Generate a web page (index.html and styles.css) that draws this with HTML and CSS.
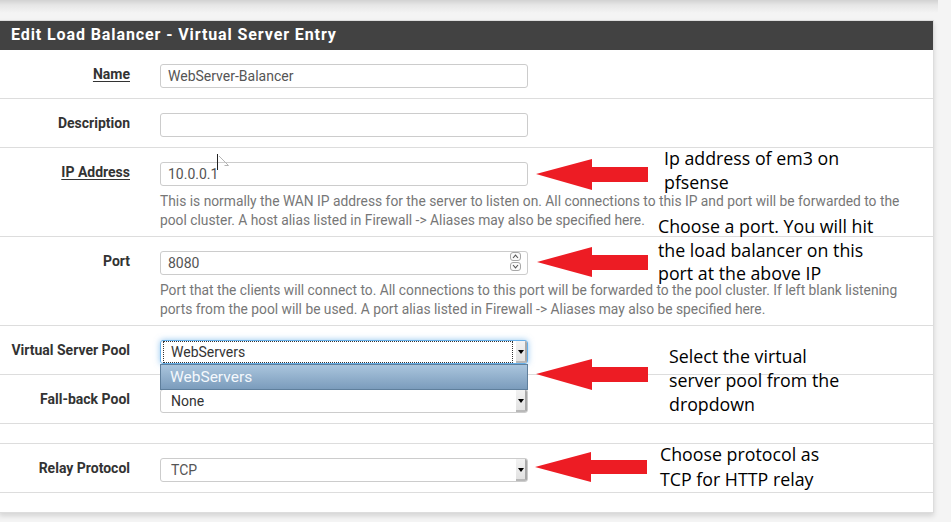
FILE: index.html
```html
<!DOCTYPE html>
<html>
<head>
<meta charset="utf-8">
<title>Edit Load Balancer - Virtual Server Entry</title>
<link rel="stylesheet" href="styles.css">
</head>
<body>
<div class="nav-shadow"></div>
<div class="panel">
  <div class="panel-heading">Edit Load Balancer - Virtual Server Entry</div>
  <div class="panel-body">
    <div class="row">
      <div class="lbl"><span class="u">Name</span></div>
      <div class="ctrl"><div class="input">WebServer-Balancer</div></div>
    </div>
    <div class="row">
      <div class="lbl">Description</div>
      <div class="ctrl"><div class="input"></div></div>
    </div>
    <div class="row has-help">
      <div class="lbl"><span class="u">IP Address</span></div>
      <div class="ctrl">
        <div class="input">10.0.0.1</div>
        <div class="help">This is normally the WAN IP address for the server to listen on. All connections to this IP and port will be forwarded to the<br>pool cluster. A host alias listed in Firewall -&gt; Aliases may also be specified here.</div>
      </div>
    </div>
    <div class="row has-help">
      <div class="lbl">Port</div>
      <div class="ctrl">
        <div class="input number">8080
          <span class="spin">
            <span class="spin-btn"><svg width="7" height="5" viewBox="0 0 7 5"><path d="M1 4 L3.5 1.2 L6 4" fill="none" stroke="#555" stroke-width="1.1"/></svg></span>
            <span class="spin-btn"><svg width="7" height="5" viewBox="0 0 7 5"><path d="M1 1 L3.5 3.8 L6 1" fill="none" stroke="#555" stroke-width="1.1"/></svg></span>
          </span>
        </div>
        <div class="help">Port that the clients will connect to. All connections to this port will be forwarded to the pool cluster. If left blank listening<br>ports from the pool will be used. A port alias listed in Firewall -&gt; Aliases may also be specified here.</div>
      </div>
    </div>
    <div class="row">
      <div class="lbl">Virtual Server Pool</div>
      <div class="ctrl">
        <div class="select focus">
          <span class="val">WebServers</span>
          <span class="dots"></span>
          <span class="sbtn"><span class="tri"></span></span>
          <div class="dropdown">WebServers</div>
        </div>
      </div>
    </div>
    <div class="row">
      <div class="lbl">Fall-back Pool</div>
      <div class="ctrl">
        <div class="select"><span class="val">None</span><span class="sbtn"><span class="tri"></span></span></div>
      </div>
    </div>
    <div class="row empty"></div>
    <div class="row">
      <div class="lbl">Relay Protocol</div>
      <div class="ctrl">
        <div class="select"><span class="val light">TCP</span><span class="sbtn"><span class="tri"></span></span></div>
      </div>
    </div>
  </div>
</div>

<svg class="overlay" width="951" height="522" viewBox="0 0 951 522">
  <g fill="#ed1c24">
    <polygon points="536,174 592,159 592,167 648,167 648,182 592,182 592,190"/>
    <polygon points="537,262 592,247 592,255 648,255 648,270 592,270 592,277"/>
    <polygon points="536,374 592,359 592,367 648,367 648,382 592,382 592,390"/>
    <polygon points="535,467 591,452 591,460 647,460 647,474 591,474 591,482"/>
  </g>
  <line x1="217.5" y1="154" x2="217.5" y2="170" stroke="#222" stroke-width="1"/>
  <polyline points="219,156 228.5,165.5 224.5,165.5" fill="none" stroke="#b5b5b5" stroke-width="1"/>
</svg>

<div class="note n1">Ip address of em3 on<br>pfsense</div>
<div class="note n2">Choose a port. You will hit<br>the load balancer on this<br>port at the above IP</div>
<div class="note n3">Select the virtual<br>server pool from the<br>dropdown</div>
<div class="note n4">Choose protocol as<br>TCP for HTTP relay</div>
</body>
</html>
```

FILE: styles.css
```css
* { box-sizing: border-box; }
html, body { margin: 0; padding: 0; }
body {
  background: #f4f4f4;
  font-family: Roboto, "Liberation Sans", Arial, sans-serif;
  width: 951px;
  height: 522px;
  overflow: hidden;
  position: relative;
}
.nav-shadow {
  height: 20px;
  width: 938px;
  background: linear-gradient(#d2d2d2, #e6e6e6 5px, #f4f4f4 13px);
}
.panel {
  margin-left: -1px;
  width: 935px;
  background: #fff;
  border: 1px solid #ddd;
  box-shadow: 0 3px 5px rgba(0,0,0,.13);
}
.panel-heading {
  height: 29px;
  background: #424242;
  color: #fff;
  font-weight: 700;
  font-size: 16px;
  line-height: 28px;
  padding-left: 11px;
  letter-spacing: .9px;
}
.panel-body { padding-bottom: 19px; }
.row {
  display: flex;
  border-bottom: 1px solid #ddd;
  padding: 14px 0 10px;
}
.row.has-help { padding-bottom: 6px; }
.row.empty { height: 20px; padding: 0; }
.lbl {
  width: 145px;
  flex: none;
  padding-right: 15px;
  text-align: right;
  font-weight: 700;
  font-size: 14px;
  line-height: 20px;
  color: #333;
}
.u { text-decoration: underline; text-underline-offset: 2px; text-decoration-thickness: 1px; }
.ctrl { flex: 1; padding-left: 15px; position: relative; }
.input {
  width: 368px;
  height: 24px;
  border: 1px solid #ccc;
  border-radius: 3px;
  padding: 0 7px;
  font-size: 14px;
  line-height: 22px;
  color: #555;
  position: relative;
}
.help {
  color: #777;
  font-size: 13.8px;
  line-height: 19px;
  margin-top: 6px;
  white-space: nowrap;
}
.spin {
  position: absolute;
  right: 6px;
  top: 0;
  display: flex;
  flex-direction: column;
  gap: 1px;
}
.spin-btn {
  width: 11px;
  height: 9px;
  border: 1px solid #a8a8a8;
  border-radius: 3px;
  background: #fafafa;
  display: flex;
  align-items: center;
  justify-content: center;
}
.spin-btn svg { display: block; }
.select {
  width: 368px;
  height: 24px;
  border: 1px solid #ccc;
  border-radius: 3px;
  font-size: 14px;
  line-height: 22px;
  color: #333;
  position: relative;
  padding-left: 10px;
}
.select .val.light { color: #555; }
.select.focus {
  border-color: #66afe9;
  box-shadow: 0 0 6px rgba(102,175,233,.7);
}
.dots {
  position: absolute;
  left: 2px;
  top: 0;
  width: 350px;
  height: 22px;
  border: 1px dotted #333;
}
.sbtn {
  position: absolute;
  right: 0;
  top: 0;
  width: 11px;
  height: 22px;
  background: linear-gradient(#f2f2f2, #e2e2e2);
  border-right: 2px solid #a9a9a9;
  border-bottom: 2px solid #b9b9b9;
  border-top-right-radius: 2px;
  border-bottom-right-radius: 2px;
}
.tri {
  position: absolute;
  left: 2px;
  top: 9px;
  width: 0;
  height: 0;
  border-left: 3px solid transparent;
  border-right: 3px solid transparent;
  border-top: 4px solid #000;
}
.dropdown {
  position: absolute;
  left: -1px;
  top: 23px;
  width: 368px;
  height: 26px;
  border: 1px solid #5f7f9c;
  background: linear-gradient(#aac5dd, #7b9cbc);
  color: #f4f8fc;
  font-size: 15.5px;
  line-height: 24px;
  padding-left: 9px;
  z-index: 2;
}
.overlay {
  position: absolute;
  left: 0;
  top: 0;
  pointer-events: none;
}
.note {
  position: absolute;
  font-family: "Open Sans", "Noto Sans", sans-serif;
  font-size: 17.8px;
  line-height: 24px;
  color: #000;
  white-space: nowrap;
}
.n1 { left: 664px; top: 146px; }
.n2 { left: 658px; top: 215px; line-height: 23.5px; }
.n3 { left: 669px; top: 344px; }
.n4 { left: 660px; top: 442px; line-height: 24.5px; }
```
